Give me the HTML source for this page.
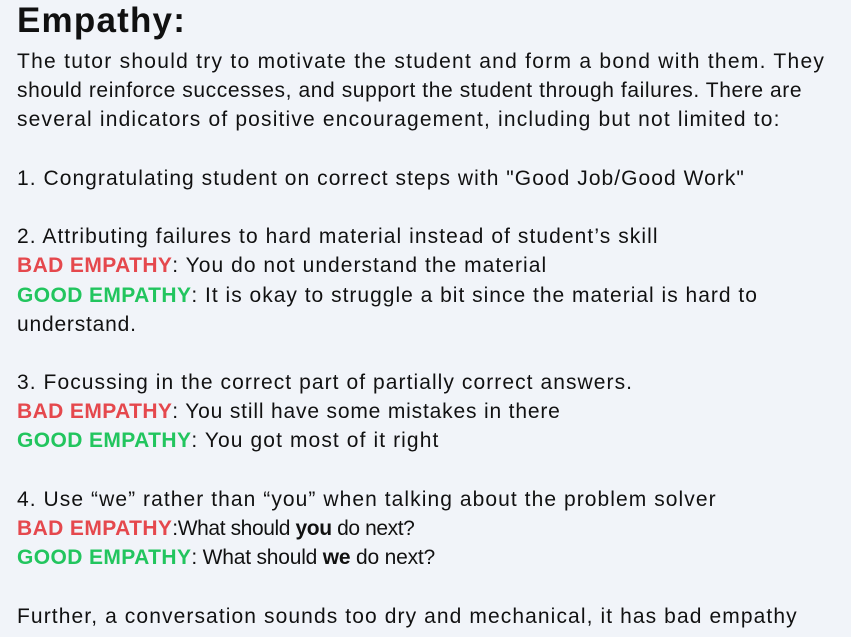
<!DOCTYPE html>
<html><head><style>
html,body{margin:0;padding:0;background:#f1f4f9;width:851px;height:637px;overflow:hidden}
body{font-family:"Liberation Sans",sans-serif;color:#111;}
h1{position:absolute;left:17px;top:1px;margin:0;font-size:35px;font-weight:bold;letter-spacing:1.2px}
.t{position:absolute;left:17px;top:47px;font-size:21px;line-height:29.2px;letter-spacing:1.2px}
.t div{height:29.2px;white-space:nowrap}
.r{color:#e5484d;font-weight:bold;letter-spacing:0.4px}
.g{color:#22c55e;font-weight:bold;letter-spacing:0.4px}
</style></head><body>
<h1>Empathy:</h1>
<div class="t"><div style="letter-spacing:1.27px">The tutor should try to motivate the student and form a bond with them. They</div><div style="letter-spacing:0.59px">should reinforce successes, and support the student through failures. There are</div><div style="letter-spacing:1.17px">several indicators of positive encouragement, including but not limited to:</div><div></div><div style="letter-spacing:1.05px">1. Congratulating student on correct steps with "Good Job/Good Work"</div><div></div><div style="letter-spacing:1.08px">2. Attributing failures to hard material instead of student’s skill</div><div style="letter-spacing:1.04px"><span class="r">BAD EMPATHY</span>: You do not understand the material</div><div style="letter-spacing:1.0px"><span class="g">GOOD EMPATHY</span>: It is okay to struggle a bit since the material is hard to</div><div style="letter-spacing:0.8px">understand.</div><div></div><div style="letter-spacing:1.07px">3. Focussing in the correct part of partially correct answers.</div><div style="letter-spacing:0.83px"><span class="r">BAD EMPATHY</span>: You still have some mistakes in there</div><div style="letter-spacing:1.1px"><span class="g">GOOD EMPATHY</span>: You got most of it right</div><div></div><div style="letter-spacing:1.07px">4. Use “we” rather than “you” when talking about the problem solver</div><div style="letter-spacing:-0.4px"><span class="r">BAD EMPATHY</span>:What should <b>you</b> do next?</div><div style="letter-spacing:-0.2px"><span class="g">GOOD EMPATHY</span>: What should <b>we</b> do next?</div><div></div><div style="letter-spacing:1.1px">Further, a conversation sounds too dry and mechanical, it has bad empathy</div></div>
</body></html>
